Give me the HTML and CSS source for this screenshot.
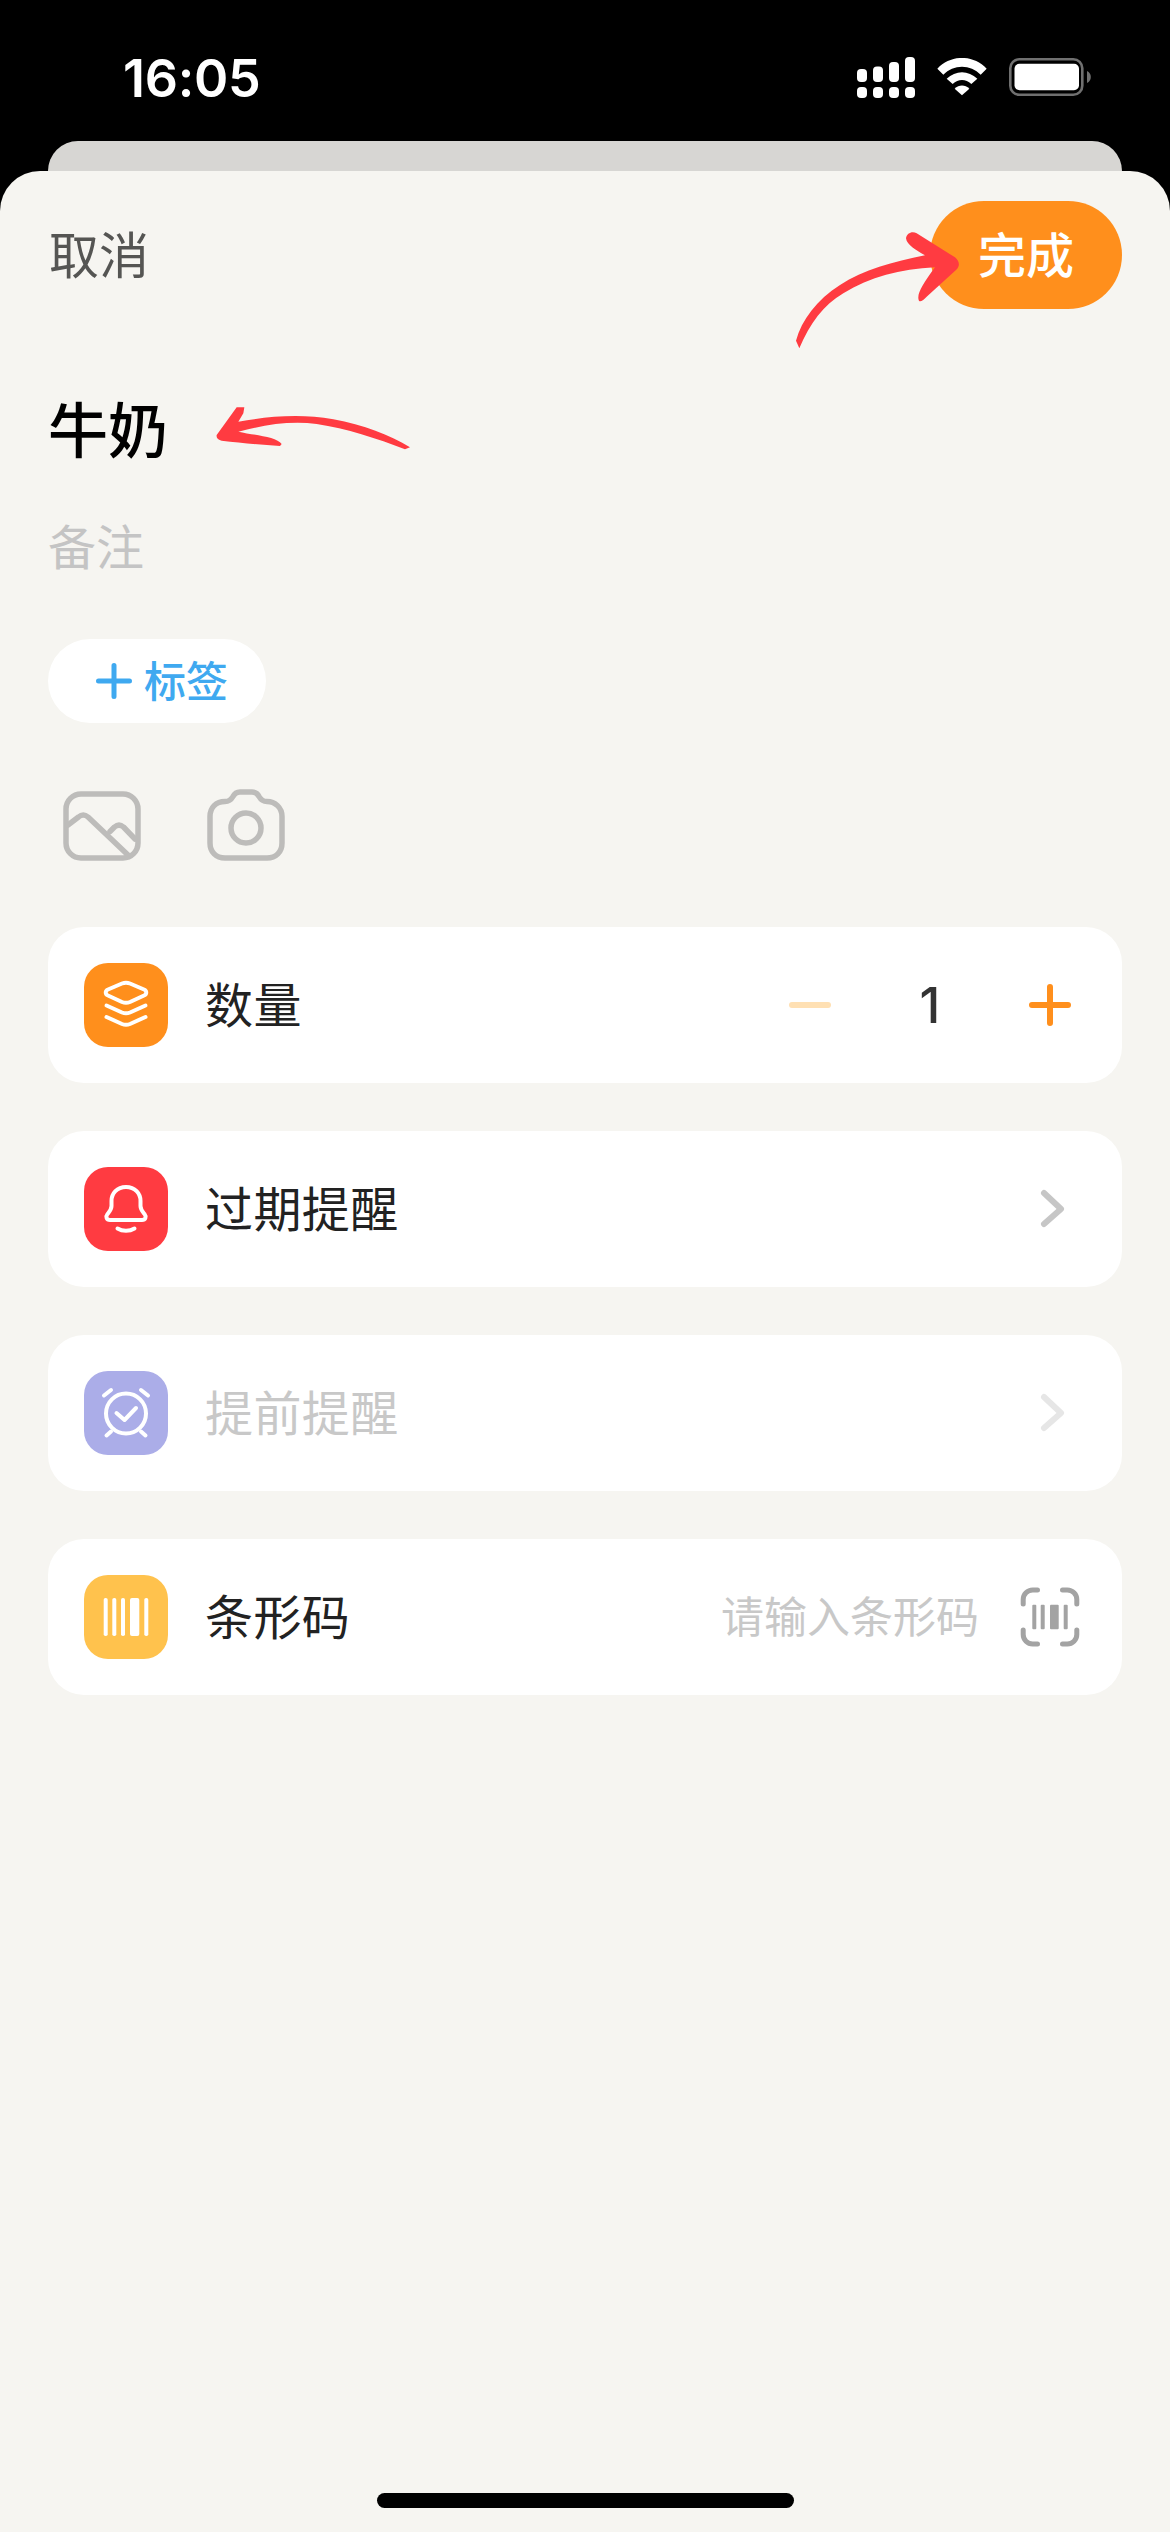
FILE: index.html
```html
<!DOCTYPE html>
<html lang="zh-CN">
<head>
<meta charset="utf-8">
<title>牛奶</title>
<link rel="stylesheet" href="styles.css">
</head>
<body>
<div class="screen">
  <header class="status">
    <span class="time">16:05</span>
    <div class="status-icons">
      <svg class="sig" viewBox="0 0 58 41" fill="#fff">
        <rect x="0" y="12" width="10" height="13" rx="4"/><rect x="16" y="9.5" width="10" height="15.5" rx="4"/><rect x="32" y="5" width="10" height="20" rx="4"/><rect x="48" y="0" width="10" height="25" rx="4"/>
        <rect x="0" y="30" width="10" height="11" rx="4"/><rect x="16" y="30" width="10" height="11" rx="4"/><rect x="32" y="30" width="10" height="11" rx="4"/><rect x="48" y="30" width="10" height="11" rx="4"/>
      </svg>
      <svg class="wifi" viewBox="350 56 148 114" fill="#fff">
        <path d="M350 88C390 45 458 45 498 88L480 106C450 74 398 74 368 106Z"/>
        <path d="M378 118C405 92 443 92 470 118L452 134C435 118 413 118 396 134Z"/>
        <path d="M402 148C415 135 433 135 446 148L424 168Z"/>
      </svg>
      <svg class="batt" viewBox="0 0 82 38">
        <rect x="1.3" y="1.3" width="72" height="35.4" rx="9" fill="none" stroke="#707070" stroke-width="2.6"/>
        <rect x="5.5" y="5.7" width="64.5" height="26.6" rx="5" fill="#fff"/>
        <path d="M78 13c2.5 1 3.8 3.4 3.8 6s-1.3 5-3.8 6z" fill="#707070"/>
      </svg>
    </div>
  </header>
  <div class="back-card"></div>
  <main class="sheet">
    <div class="nav">
      <span class="cancel">取消</span>
      <button class="done">完成</button>
    </div>
    <h1 class="title">牛奶</h1>
    <p class="note">备注</p>
    <div class="tag-pill">
      <svg class="tag-plus" viewBox="0 0 36 36" fill="none" stroke="#3FA9F0" stroke-width="5" stroke-linecap="round"><path d="M2.5 18h31M18 2.500v31"/></svg>
      <span class="tag-text">标签</span>
    </div>
    <div class="media">
      <svg class="media-icon" viewBox="0 0 78 72" fill="none" stroke="#BDBCBA" stroke-width="5.500" stroke-linecap="round" stroke-linejoin="round">
        <rect x="3" y="5" width="72" height="64" rx="15"/>
        <path d="M5 36l10.500-8c3-2.500 6.500-2.500 9.500 0L65 66"/>
        <path d="M47 42.500l4.500-4.500c3-2.500 6-2.500 9 0L72 50"/>
      </svg>
      <svg class="media-icon" viewBox="0 0 78 72" fill="none" stroke="#BDBCBA" stroke-width="5.500" stroke-linejoin="round">
        <path d="M18 12.500c4 0 6-1.500 8-5 1.500-3 3.500-4.500 7-4.500h12c3.500 0 5.500 1.500 7 4.500 2 3.500 4 5 8 5 8 0 15 6 15 15V54c0 9-6 15-15 15H18C9 69 3 63 3 54V27.500c0-9 6-15 15-15z"/>
        <circle cx="39" cy="39" r="15"/>
      </svg>
    </div>
    <section class="rows">
      <div class="row">
        <svg class="tile" viewBox="0 0 84 84"><rect class="t-orange" width="84" height="84" rx="24"/><g fill="none" stroke="#fff" stroke-width="4" stroke-linecap="round" stroke-linejoin="round"><path d="M38 20.500c2.500-1 5.500-1 8 0l14 6c3 1.300 3 4.700 0 6l-14 6.500c-2.500 1-5.500 1-8 0l-14-6.500c-3-1.300-3-4.700 0-6z"/><path d="M22.500 42.500L38 49.500c2.500 1 5.500 1 8 0l15.500-7"/><path d="M22.500 54L38 61c2.500 1 5.500 1 8 0l15.500-7"/></g></svg>
        <span class="label">数量</span>
        <div class="trail">
          <svg class="cell" viewBox="0 0 60 60" fill="none" stroke="#FFE0B3" stroke-width="6" stroke-linecap="round"><path d="M12 30h36"/></svg>
          <span class="qty">1</span>
          <svg class="cell" viewBox="0 0 60 60" fill="none" stroke="#FF8F1C" stroke-width="6" stroke-linecap="round"><path d="M12 30h36M30 12v36"/></svg>
        </div>
      </div>
      <div class="row">
        <svg class="tile" viewBox="0 0 84 84"><rect class="t-red" width="84" height="84" rx="24"/><g fill="none" stroke="#fff" stroke-width="4" stroke-linecap="round" stroke-linejoin="round"><path d="M42 20c-9 0-14.500 6.500-14.500 14v5c0 3.500-2 5.500-4 8-2.200 2.800-1 6 2.500 6h32c3.500 0 4.700-3.200 2.500-6-2-2.500-4-4.500-4-8v-5c0-7.500-5.500-14-14.500-14z"/><path d="M33.500 61.500c5 3 12 3 17 0"/></g></svg>
        <span class="label">过期提醒</span>
        <div class="trail">
          <svg class="cell" viewBox="0 0 60 60" fill="none" stroke="#C6C6C6" stroke-width="6" stroke-linecap="round" stroke-linejoin="round"><path d="M24 14l17 16-17 15"/></svg>
        </div>
      </div>
      <div class="row">
        <svg class="tile" viewBox="0 0 84 84"><rect class="t-violet" width="84" height="84" rx="24"/><g fill="none" stroke="#fff" stroke-width="4" stroke-linecap="round" stroke-linejoin="round"><circle cx="42" cy="42.500" r="20"/><path d="M32.500 42l8 7 11.500-12"/><path d="M20 24.500l7-5.500M64 24.500l-7-5.500M22.500 64.500l4.500-4M61.500 64.500l-4.500-4"/></g></svg>
        <span class="label is-disabled">提前提醒</span>
        <div class="trail">
          <svg class="cell" viewBox="0 0 60 60" fill="none" stroke="#E6E6E6" stroke-width="6" stroke-linecap="round" stroke-linejoin="round"><path d="M24 14l17 16-17 15"/></svg>
        </div>
      </div>
      <div class="row">
        <svg class="tile" viewBox="0 0 84 84"><rect class="t-yellow" width="84" height="84" rx="24"/><g fill="#fff"><rect x="19.700" y="23" width="4" height="38" rx="1.800"/><rect x="28.300" y="23" width="4" height="38" rx="1.800"/><rect x="37" y="23" width="4" height="38" rx="1.800"/><rect x="46" y="23" width="9.300" height="38" rx="2"/><rect x="60.300" y="23" width="4" height="38" rx="1.800"/></g></svg>
        <span class="label">条形码</span>
        <div class="trail">
          <span class="placeholder">请输入条形码</span>
          <svg class="cell" viewBox="0 0 60 60"><g fill="none" stroke="#A3A3A3" stroke-width="5" stroke-linecap="round"><path d="M3.200 17v-4.500a9.500 9.500 0 0 1 9.500-9.500h4.800M42.500 3h4.800a9.500 9.500 0 0 1 9.500 9.500V17M3.200 43v4.500a9.500 9.500 0 0 0 9.500 9.500h4.800M42.500 57h4.800a9.500 9.500 0 0 0 9.500-9.500V43"/></g><g fill="#A3A3A3"><rect x="12.300" y="17.700" width="4" height="24.600" rx="1"/><rect x="20.700" y="17.700" width="4" height="24.600" rx="1"/><rect x="30" y="17.700" width="8.700" height="24.600" rx="1"/><rect x="43.700" y="17.700" width="4" height="24.600" rx="1"/></g></svg>
        </div>
      </div>
    </section>
    <div class="home-bar"></div>
    <svg class="arrow arrow-done" viewBox="0 0 1140 540"><path d="M118 505L108 482C125 420 170 360 240 315C310 270 400 245 495 226C470 212 440 195 438 175C440 158 458 152 470 160L585 232C600 245 600 258 588 270L500 350C490 362 478 368 476 360C470 340 490 310 525 262C420 268 330 290 250 340C190 375 150 430 118 505Z"/></svg>
    <svg class="arrow arrow-title" viewBox="600 90 660 160"><path d="M650 195L710 112L733 112L730 130L715 155C800 140 900 130 1000 148C1090 165 1170 195 1230 232L1215 238C1130 205 1040 175 950 162C870 152 790 165 715 185C760 195 830 200 845 222L840 228C780 225 720 218 665 212C655 210 648 205 650 195Z"/></svg>
  </main>
</div>
</body>
</html>
```
FILE: styles.css
```css
* { box-sizing: border-box; }
html, body { margin: 0; padding: 0; background: #000; }
body { font-family: "Noto Sans CJK SC", "Inter", sans-serif; }
.screen { width: 1170px; height: 2532px; display: flex; flex-direction: column; overflow: hidden; }

.status { height: 141px; flex: none; display: flex; align-items: center; justify-content: space-between; padding: 13px 79px 0 123px; }
.time { font-family: "Inter", sans-serif; font-weight: 600; font-size: 52px; line-height: 62px; color: #fff; letter-spacing: -0.3px; padding-top: 3px; }
.status-icons { display: flex; align-items: center; gap: 22px; }
.sig { width: 58px; height: 41px; }
.wifi { width: 50px; height: 38px; }
.batt { width: 82px; height: 38px; }

.back-card { height: 30px; flex: none; margin: 0 48px; background: #D7D6D3; border-radius: 32px 32px 0 0; }

.sheet { position: relative; flex: 1; display: flex; flex-direction: column; background: #F6F5F1; border-radius: 40px 40px 0 0; padding: 30px 48px 24px; }

.nav { display: flex; justify-content: space-between; align-items: center; height: 108px; }
.cancel { font-size: 50px; line-height: 60px; color: #555553; padding-left: 1px; padding-bottom: 6px; }
.done { width: 192px; height: 108px; border: 0; border-radius: 54px; background: #FF8F1C; color: #fff; font: 500 48px/60px "Noto Sans CJK SC", sans-serif; padding: 0 0 6px; }

.title { margin: 82px 0 0; font-size: 60px; line-height: 72px; font-weight: 500; color: #000; }
.note { margin: 49px 0 0; font-size: 48px; line-height: 64px; color: #C4C4C4; }

.tag-pill { margin-top: 63px; align-self: flex-start; width: 218px; height: 84px; border-radius: 42px; background: #fff; display: flex; align-items: center; gap: 12px; padding-left: 48px; font-size: 42px; line-height: 56px; font-weight: 500; color: #3FA9F0; }
.tag-plus { width: 36px; height: 36px; flex: none; }
.tag-text { padding-bottom: 4px; }

.media { margin-top: 66px; padding-left: 15px; display: flex; gap: 66px; height: 72px; }
.media-icon { width: 78px; height: 72px; }

.rows { margin-top: 66px; display: flex; flex-direction: column; gap: 48px; }
.row { height: 156px; border-radius: 36px; background: #fff; display: flex; align-items: center; padding: 0 42px 0 36px; }
.tile { width: 84px; height: 84px; flex: none; }
.t-orange { fill: #FF8F1C; }
.t-red { fill: #FF3B41; }
.t-violet { fill: #ABADE8; }
.t-yellow { fill: #FFC24D; }
.label { margin-left: 37px; padding-bottom: 6px; font-size: 48px; letter-spacing: 0.4px; line-height: 60px; color: #222; }
.is-disabled { color: #C8C8C8; }
.trail { margin-left: auto; display: flex; align-items: center; }
.cell { width: 60px; height: 60px; flex: none; }
.qty { width: 180px; text-align: center; font-family: "Inter", sans-serif; font-weight: 500; font-size: 50px; line-height: 60px; color: #333; }
.placeholder { margin-right: 41px; padding-bottom: 6px; font-size: 43px; line-height: 60px; color: #C8C8C8; }

.home-bar { margin: auto auto 0; width: 417px; height: 15px; border-radius: 8px; background: #000; }

.arrow { position: absolute; fill: #FF3B41; }
.arrow-done { left: 760px; top: 9px; width: 380px; height: 180px; }
.arrow-title { left: 200px; top: 229px; width: 220px; height: 53.33px; }
```
